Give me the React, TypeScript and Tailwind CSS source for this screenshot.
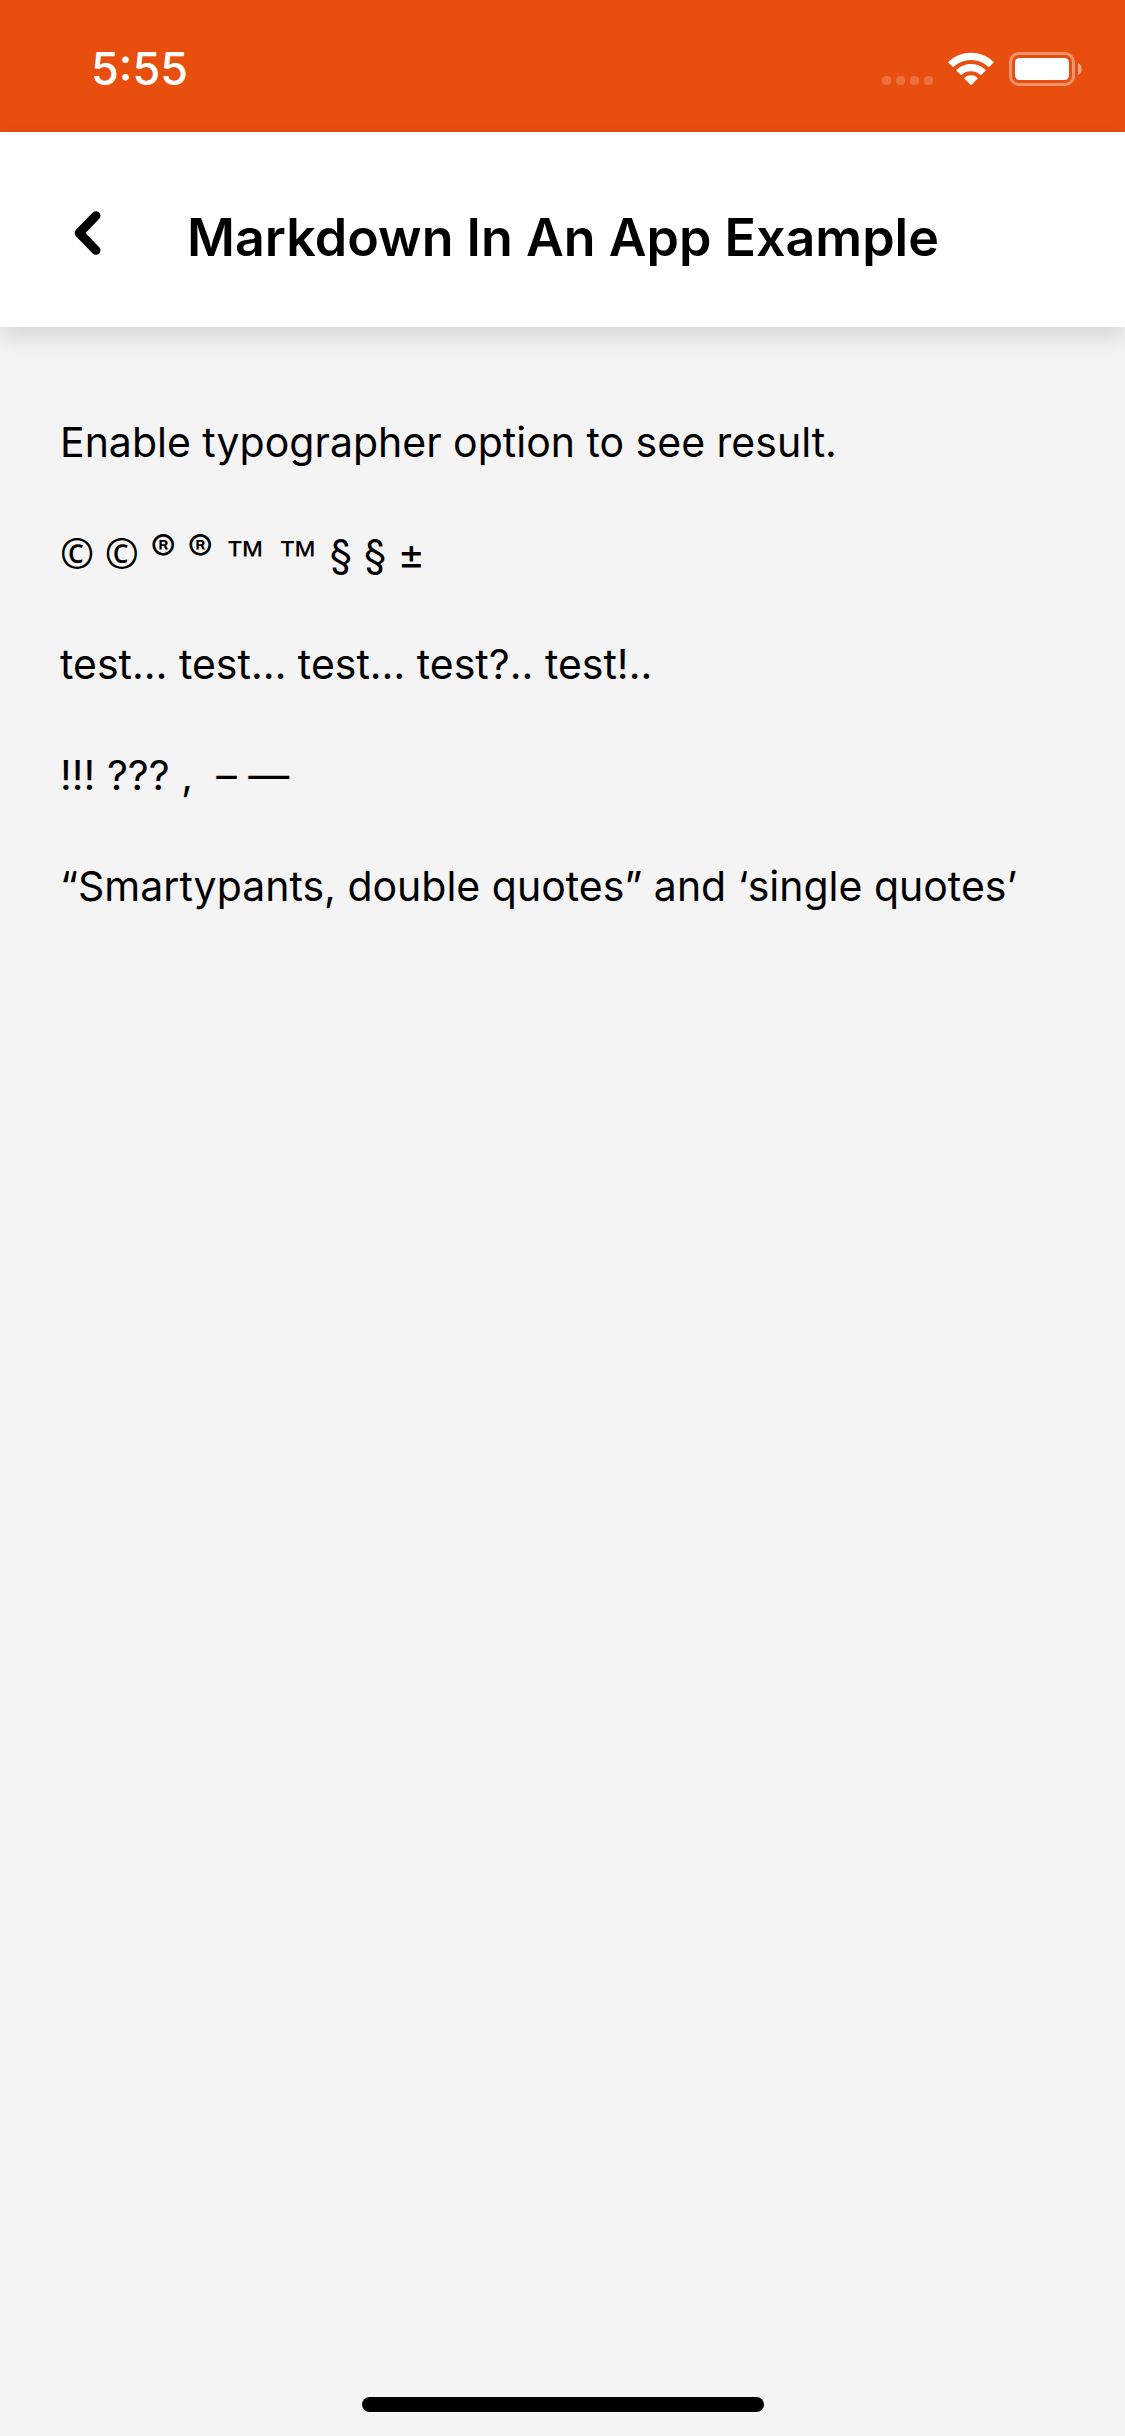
import type { ReactNode } from "react";

function StatusIcons() {
  return (
    <div className="flex items-end">
      <div className="mr-[15px] mb-px flex gap-[5px]" aria-label="No cellular signal">
        {[0, 1, 2, 3].map((i) => (
          <span key={i} className="size-[9px] rounded-[4px] bg-white/20" />
        ))}
      </div>
      <svg className="mr-[14px] h-[34px] w-[46px]" viewBox="0 0 46 34" fill="#fff" aria-label="Wi-Fi">
        <g stroke="#fff" strokeWidth="1.4" strokeLinejoin="round">
          <path d="M1 10.2 A32 32 0 0 1 45 10.2 L40.8 14.3 A26 26 0 0 0 5.2 14.3 Z" />
          <path d="M9 18.2 A20.8 20.8 0 0 1 37 18.2 L32.8 22.2 A15 15 0 0 0 13.2 22.2 Z" />
          <path d="M17 26.2 A9.2 9.2 0 0 1 29 26.2 L23 32.2 Z" />
        </g>
      </svg>
      <svg className="h-[34px] w-[74px]" viewBox="0 0 74 34" aria-label="Battery full">
        <rect x="2.5" y="1.5" width="63" height="31" rx="8.5" fill="none" stroke="#fff" strokeOpacity="0.4" strokeWidth="3" />
        <rect x="7" y="6" width="54" height="22" rx="4.5" fill="#fff" />
        <path d="M70 11 C75 13 75 21 70 23 Z" fill="#fff" fillOpacity="0.5" />
      </svg>
    </div>
  );
}

function Paragraph({ children }: { children: ReactNode }) {
  return <p className="h-[51px] text-[41px] leading-[51px]">{children}</p>;
}

export default function App() {
  return (
    <div className="flex min-h-screen flex-col bg-[#f4f4f4] font-[Inter,sans-serif] text-black">
      <div className="flex h-[132px] items-center justify-between bg-[#e84e0e] pt-[6px] pr-[43px] pl-[91px] text-white">
        <time className="text-[45px] leading-[52px] font-medium">5:55</time>
        <StatusIcons />
      </div>
      <header className="relative flex h-[195px] items-center bg-white px-[60px] pt-[16px] shadow-[0_12px_20px_rgba(0,0,0,0.11)]">
        <button type="button" aria-label="Back" className="mb-[9px] flex w-[127px] pl-[14px]">
          <svg className="h-[44px] w-[27px]" viewBox="0 0 27 44" fill="none" stroke="#000" strokeWidth="9" strokeLinecap="round" strokeLinejoin="round">
            <path d="M22 4.7 L5.2 22 L22 39.3" />
          </svg>
        </button>
        <h1 className="text-[52px] leading-[64px] font-semibold whitespace-nowrap">Markdown In An App Example</h1>
      </header>
      <main className="flex flex-1 flex-col gap-[60px] px-[60px] pt-[90px]">
        <Paragraph>Enable typographer option to see result.</Paragraph>
        <Paragraph>
          <span className="font-['Noto_Sans',sans-serif]">© ©</span>{" "}
          <span className="align-text-top text-[38px] leading-none">®</span>{" "}
          <span className="align-text-top text-[38px] leading-none">®</span>{" "}
          <span className="font-['Liberation_Sans',sans-serif]">™ ™</span> § § ±
        </Paragraph>
        <Paragraph>test… test… test… test?.. test!..</Paragraph>
        <Paragraph>!!! ??? ,&nbsp; – —</Paragraph>
        <Paragraph>“Smartypants, double quotes” and ‘single quotes’</Paragraph>
      </main>
      <div className="mx-auto mb-[24px] h-[15px] w-[402px] rounded-full bg-black" />
    </div>
  );
}
